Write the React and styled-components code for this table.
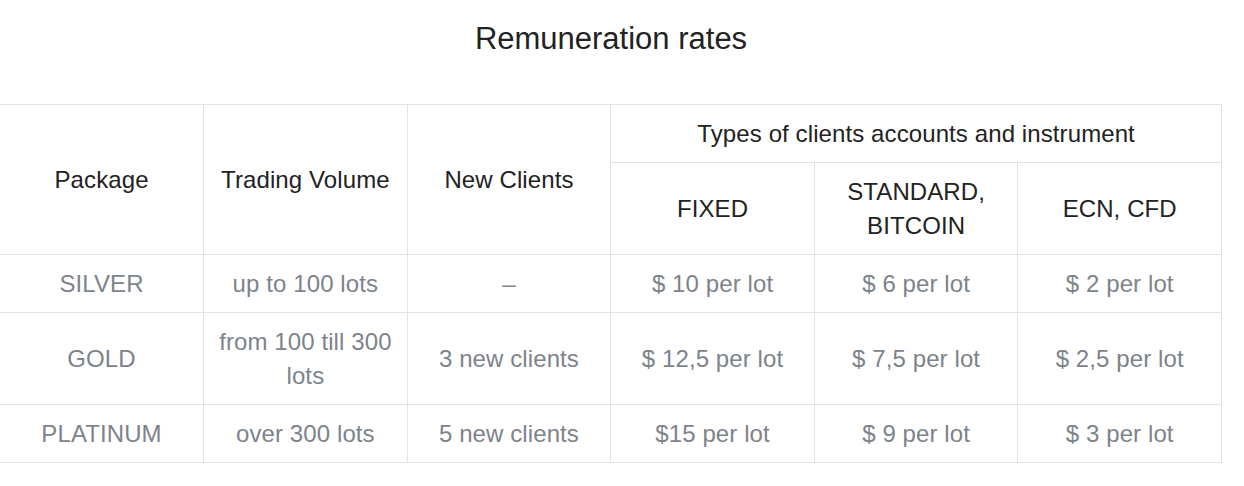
import React from 'react'
import styled, { createGlobalStyle } from 'styled-components'

const GlobalStyle = createGlobalStyle`
  body {
    margin: 0;
    background: #fff;
    font-family: "Liberation Sans", Arial, sans-serif;
  }
`;

const Wrapper = styled.div`
  width: 1222px;
`;

const Title = styled.h2`
  margin: 21px 0 47px;
  font-size: 31px;
  font-weight: 400;
  line-height: 36px;
  text-align: center;
  color: #222;
`;

const Table = styled.table`
  width: 1222px;
  table-layout: fixed;
  border-collapse: collapse;
  border-top: 1px solid #e3e3e3;
`;

const Cell = styled.td`
  padding: 11.5px 10px;
  border: 1px solid #e3e3e3;
  text-align: center;
  vertical-align: middle;
  font-size: 24px;
  line-height: 34px;
  letter-spacing: 0.1px;
  color: ${({ head }) => (head ? '#222' : '#7d838b')};
  &:first-child {
    border-left: ${({ inner }) => (inner ? '1px solid #e3e3e3' : 'none')};
  }
`;

const Head = styled(Cell).attrs({ as: 'th' })`
  font-weight: 400;
`;

const rows = [
  ['SILVER', 'up to 100 lots', '–', '$ 10 per lot', '$ 6 per lot', '$ 2 per lot'],
  ['GOLD', 'from 100 till 300 lots', '3 new clients', '$ 12,5 per lot', '$ 7,5 per lot', '$ 2,5 per lot'],
  ['PLATINUM', 'over 300 lots', '5 new clients', '$15 per lot', '$ 9 per lot', '$ 3 per lot'],
];

const App = () => {
  return (
    <Wrapper>
      <GlobalStyle />
      <Title>Remuneration rates</Title>
      <Table>
        <thead>
          <tr>
            <Head head rowSpan={2}>Package</Head>
            <Head head rowSpan={2}>Trading Volume</Head>
            <Head head rowSpan={2}>New Clients</Head>
            <Head head colSpan={3}>Types of clients accounts and instrument</Head>
          </tr>
          <tr>
            <Head head inner>FIXED</Head>
            <Head head>STANDARD,<br />BITCOIN</Head>
            <Head head>ECN, CFD</Head>
          </tr>
        </thead>
        <tbody>
          {rows.map((row) => (
            <tr key={row[0]}>
              {row.map((value, i) => (
                <Cell key={i}>{value}</Cell>
              ))}
            </tr>
          ))}
        </tbody>
      </Table>
    </Wrapper>
  )
}

export default App
